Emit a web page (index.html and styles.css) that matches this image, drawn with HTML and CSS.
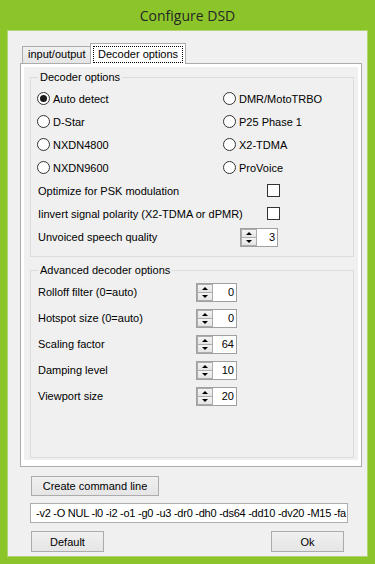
FILE: index.html
```html
<!DOCTYPE html>
<html>
<head>
    <title>Configure DSD</title>
    <link rel="stylesheet" href="styles.css">
</head>
<body>
    <div class="window">
        <div class="titlebar">Configure DSD</div>
        <div class="client">
            <div class="tabs">
                <div class="tab-strip">
                    <div class="tab">input/output</div>
                    <div class="tab active"><span class="focus">Decoder options</span></div>
                </div>
                <div class="tab-page">
                    <div class="panel">
                        <fieldset class="group">
                            <legend>Decoder options</legend>
                            <div class="radios">
                                <label class="radio checked"><span class="dot"></span>Auto detect</label>
                                <label class="radio"><span class="dot"></span>DMR/MotoTRBO</label>
                                <label class="radio"><span class="dot"></span>D-Star</label>
                                <label class="radio"><span class="dot"></span>P25 Phase 1</label>
                                <label class="radio"><span class="dot"></span>NXDN4800</label>
                                <label class="radio"><span class="dot"></span>X2-TDMA</label>
                                <label class="radio"><span class="dot"></span>NXDN9600</label>
                                <label class="radio"><span class="dot"></span>ProVoice</label>
                            </div>
                            <div class="opt-row">
                                <span>Optimize for PSK modulation</span>
                                <span class="check"></span>
                            </div>
                            <div class="opt-row">
                                <span>Iinvert signal polarity (X2-TDMA or dPMR)</span>
                                <span class="check"></span>
                            </div>
                            <div class="opt-row tall">
                                <span>Unvoiced speech quality</span>
                                <div class="spin">
                                    <span class="spin-btns"><i class="up"></i><i class="down"></i></span>
                                    <span class="val">3</span>
                                </div>
                            </div>
                        </fieldset>

                        <fieldset class="group adv">
                            <legend>Advanced decoder options</legend>
                            <div class="adv-row">
                                <span>Rolloff filter (0=auto)</span>
                                <div class="spin wide">
                                    <span class="spin-btns"><i class="up"></i><i class="down"></i></span>
                                    <span class="val">0</span>
                                </div>
                            </div>
                            <div class="adv-row">
                                <span>Hotspot size (0=auto)</span>
                                <div class="spin wide">
                                    <span class="spin-btns"><i class="up"></i><i class="down"></i></span>
                                    <span class="val">0</span>
                                </div>
                            </div>
                            <div class="adv-row">
                                <span>Scaling factor</span>
                                <div class="spin wide">
                                    <span class="spin-btns"><i class="up"></i><i class="down"></i></span>
                                    <span class="val">64</span>
                                </div>
                            </div>
                            <div class="adv-row">
                                <span>Damping level</span>
                                <div class="spin wide">
                                    <span class="spin-btns"><i class="up"></i><i class="down"></i></span>
                                    <span class="val">10</span>
                                </div>
                            </div>
                            <div class="adv-row">
                                <span>Viewport size</span>
                                <div class="spin wide">
                                    <span class="spin-btns"><i class="up"></i><i class="down"></i></span>
                                    <span class="val">20</span>
                                </div>
                            </div>
                        </fieldset>
                    </div>
                </div>
            </div>

            <div class="actions">
                <button class="btn cmd-btn">Create command line</button>
                <div class="cmd-line">-v2 -O NUL -l0 -i2 -o1 -g0 -u3 -dr0 -dh0 -ds64 -dd10 -dv20 -M15 -fa</div>
                <div class="btn-row">
                    <button class="btn">Default</button>
                    <button class="btn">Ok</button>
                </div>
            </div>
        </div>
    </div>
</body>
</html>
```

FILE: styles.css
```css
* {
    margin: 0;
    padding: 0;
    box-sizing: border-box;
}

body {
    font-family: 'Liberation Sans', Arial, sans-serif;
    font-size: 11px;
    color: #000;
    background: #8bc52a;
}

.window {
    width: 375px;
    height: 564px;
    background: #8bc52a;
    padding: 0 7px 7px;
    display: flex;
    flex-direction: column;
}

.titlebar {
    height: 30px;
    display: flex;
    align-items: center;
    justify-content: center;
    font-family: 'Open Sans', sans-serif;
    font-size: 14px;
    color: #262626;
}

.client {
    flex: 1;
    background: #f0f0f0;
    border: 1px solid #b2d574;
    padding: 12px 5px 0 12px;
    display: flex;
    flex-direction: column;
}

/* Tab control */
.tab-strip {
    display: flex;
    align-items: flex-end;
    height: 20px;
    padding-left: 2px;
}

.tab {
    width: 69px;
    height: 17px;
    border: 1px solid #acacac;
    border-bottom: none;
    background: linear-gradient(#f0f0f0, #e5e5e5);
    padding: 1px 0 0 5px;
    line-height: 13px;
    white-space: nowrap;
}

.tab.active {
    width: auto;
    height: 21px;
    margin-left: -1px;
    margin-bottom: -1px;
    background: #fff;
    padding: 2px 2px 0;
    position: relative;
    z-index: 1;
}

.focus {
    display: block;
    border: 1px dotted #000;
    padding: 1px 4px;
    line-height: 13px;
}

.tab-page {
    height: 404px;
    border: 1px solid #acacac;
    background: #fff;
    padding: 3px 3px 6px;
}

.panel {
    height: 100%;
    background: #f0f0f0;
    padding: 4px 4px 2px 6px;
    display: flex;
    flex-direction: column;
}

/* Group boxes */
.group {
    border: 1px solid #dcdcdc;
    padding: 3px 0 7px 6px;
}

.group legend {
    padding: 0 2px;
    margin-left: 1px;
    line-height: 13px;
}

.group.adv {
    flex: 1;
    margin-top: 7px;
    padding-top: 2px;
}

.radios {
    display: grid;
    grid-template-columns: 186px 1fr;
    grid-auto-rows: 23px;
}

.radio {
    display: flex;
    align-items: center;
}

.dot {
    width: 13px;
    height: 13px;
    border: 1px solid #333;
    border-radius: 50%;
    background: #fff;
    margin-right: 3px;
    display: flex;
    align-items: center;
    justify-content: center;
}

.radio.checked .dot::after {
    content: "";
    width: 7px;
    height: 7px;
    border-radius: 50%;
    background: #1a1a1a;
}

.opt-row {
    display: flex;
    align-items: center;
    justify-content: space-between;
    width: 242px;
    height: 23px;
    margin-left: 1px;
}

.opt-row.tall {
    height: 24px;
}

.opt-row .spin {
    margin-right: 2px;
}

.check {
    width: 13px;
    height: 13px;
    border: 1px solid #333;
    background: #fff;
}

.adv-row {
    display: flex;
    align-items: center;
    justify-content: space-between;
    width: 199px;
    height: 26px;
    margin-left: 1px;
}

/* Numeric up/down */
.spin {
    width: 38px;
    height: 19px;
    border: 1px solid #a0a0a0;
    background: #fff;
    display: flex;
    align-items: center;
}

.spin.wide {
    width: 41px;
}

.spin-btns {
    width: 16px;
    height: 17px;
    display: flex;
    flex-direction: column;
}

.spin-btns i {
    flex: 1;
    border: 1px solid #acacac;
    background: linear-gradient(#f4f4f4, #e4e4e4);
    display: flex;
    align-items: center;
    justify-content: center;
}

.spin-btns i + i {
    border-top: none;
}

.up::after {
    content: "";
    border-left: 3px solid transparent;
    border-right: 3px solid transparent;
    border-bottom: 3px solid #000;
}

.down::after {
    content: "";
    border-left: 3px solid transparent;
    border-right: 3px solid transparent;
    border-top: 3px solid #000;
}

.val {
    flex: 1;
    text-align: right;
    padding-right: 2px;
}

/* Bottom area */
.actions {
    padding-left: 10px;
}

.btn {
    font: inherit;
    color: #000;
    border: 1px solid #acacac;
    background: linear-gradient(#f0f0f0, #e5e5e5);
    text-align: center;
}

.cmd-btn {
    display: block;
    margin: 9px 0 0 1px;
    width: 128px;
    height: 20px;
}

.cmd-line {
    margin-top: 7px;
    width: 318px;
    height: 20px;
    border: 1px solid #abadb3;
    background: #fff;
    padding-left: 5px;
    line-height: 18px;
    letter-spacing: -0.25px;
    white-space: nowrap;
    overflow: hidden;
}

.btn-row {
    display: flex;
    justify-content: space-between;
    width: 313px;
    margin: 8px 0 0 1px;
}

.btn-row .btn {
    width: 73px;
    height: 21px;
}
```
